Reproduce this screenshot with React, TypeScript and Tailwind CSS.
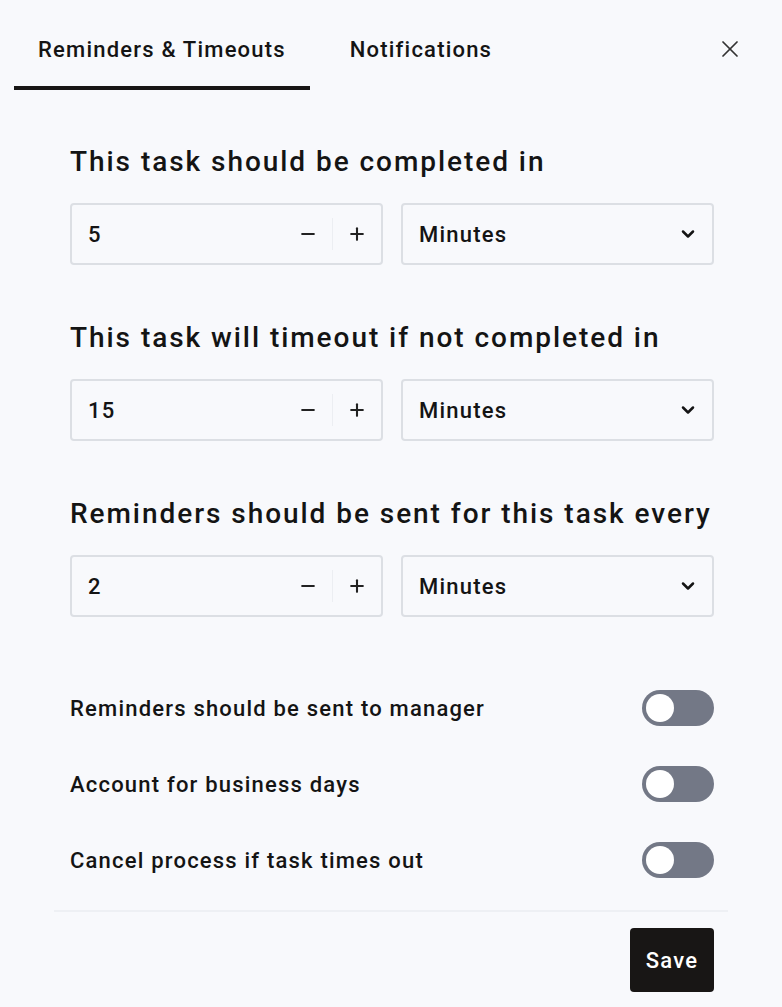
import { useState } from 'react';
import { X, Minus, Plus, ChevronDown } from 'lucide-react';

const font = { fontFamily: 'Roboto, "Noto Sans", sans-serif' };

type Duration = { heading: string; value: number };

const durations: Duration[] = [
  { heading: 'This task should be completed in', value: 5 },
  { heading: 'This task will timeout if not completed in', value: 15 },
  { heading: 'Reminders should be sent for this task every', value: 2 },
];

const switches = [
  'Reminders should be sent to manager',
  'Account for business days',
  'Cancel process if task times out',
];

function Stepper({ initial }: { initial: number }) {
  const [value, setValue] = useState(initial);
  return (
    <div className="flex h-[62px] items-center rounded-[4px] border-2 border-[#dcdfe4] pl-[16px] pr-[8px]">
      <span className="flex-1 text-[22px] font-medium tracking-[1.2px] text-[#141414]">{value}</span>
      <button className="flex h-8 w-8 items-center justify-center text-[#222]" onClick={() => setValue(v => Math.max(0, v - 1))}>
        <Minus size={20} strokeWidth={2.5} />
      </button>
      <div className="mx-[8px] h-[32px] w-px bg-[#eceef2]" />
      <button className="flex h-8 w-8 items-center justify-center text-[#222]" onClick={() => setValue(v => v + 1)}>
        <Plus size={20} strokeWidth={2.5} />
      </button>
    </div>
  );
}

function UnitSelect() {
  return (
    <div className="flex h-[62px] items-center rounded-[4px] border-2 border-[#dcdfe4] pl-[16px] pr-[14px]">
      <span className="flex-1 text-[22px] font-medium tracking-[1.2px] text-[#141414]">Minutes</span>
      <ChevronDown size={20} strokeWidth={3} className="text-[#141414]" />
    </div>
  );
}

function Toggle() {
  const [on, setOn] = useState(false);
  return (
    <button
      onClick={() => setOn(!on)}
      className={`flex h-[36px] w-[72px] items-center rounded-full px-[4px] ${on ? 'justify-end bg-[#181615]' : 'bg-[#737886]'}`}
    >
      <span className="h-[28px] w-[28px] rounded-full bg-white" />
    </button>
  );
}

export default function App() {
  const [tab, setTab] = useState(0);
  return (
    <div className="min-h-[1007px] w-full bg-[#f8f9fc] text-[#141414]" style={font}>
      {/* tab bar */}
      <div className="flex items-start pl-[14px] pr-[38px] pt-[29px]">
        {['Reminders & Timeouts', 'Notifications'].map((t, i) => (
          <button
            key={t}
            onClick={() => setTab(i)}
            className={`mr-[16px] h-[61px] border-b-4 px-[24px] pb-[16px] text-[22px] font-medium tracking-[1.2px] ${tab === i ? 'border-[#181615]' : 'border-transparent'}`}
          >
            {t}
          </button>
        ))}
        <div className="flex-1" />
        <button className="mt-[6px] text-[#333]">
          <X size={28} strokeWidth={1.5} />
        </button>
      </div>

      <div className="pl-[70px] pr-[68px] pt-[52px]">
        {durations.map(d => (
          <div key={d.heading} className="mb-[53px]">
            <h2 className="whitespace-nowrap text-[28px] font-medium leading-[40px] tracking-[1.95px]">{d.heading}</h2>
            <div className="mt-[21px] grid grid-cols-2 gap-[18px]">
              <Stepper initial={d.value} />
              <UnitSelect />
            </div>
          </div>
        ))}

        <div className="mt-[73px] flex flex-col gap-[40px]">
          {switches.map(s => (
            <div key={s} className="flex items-center justify-between">
              <span className="text-[22px] font-medium tracking-[1.2px]">{s}</span>
              <Toggle />
            </div>
          ))}
        </div>
      </div>

      <div className="mx-[54px] mt-[32px] border-t-2 border-[#eef0f4]" />
      <div className="flex justify-end px-[68px] pt-[16px]">
        <button className="h-[64px] w-[84px] rounded-[4px] bg-[#181615] text-[22px] font-medium tracking-[1.2px] text-white">Save</button>
      </div>
    </div>
  );
}
